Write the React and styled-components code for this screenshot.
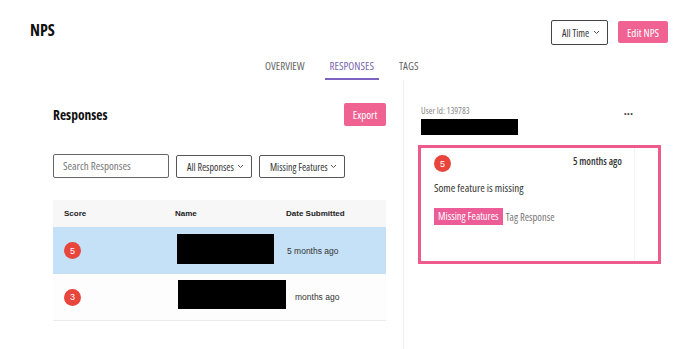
import React from "react";
import styled, { createGlobalStyle } from "styled-components";

const Global = createGlobalStyle`
  html, body { margin: 0; padding: 0; background: #ffffff; }
  body { font-family: "Open Sans", "Noto Sans", sans-serif; font-stretch: 75%; color: #222; }
  * { box-sizing: border-box; }
`;

const Page = styled.div`
  width: 700px;
  height: 349px;
  overflow: hidden;
  display: flex;
  flex-direction: column;
`;

const Header = styled.div`
  display: flex;
  justify-content: space-between;
  align-items: flex-start;
  padding: 20px 32px 0 30px;
  height: 45px;
`;

const Title = styled.h1`
  margin: 0;
  font-size: 16px;
  line-height: 20px;
  font-weight: 700;
  color: #111;
`;

const Actions = styled.div`
  display: flex;
  gap: 10px;
  align-items: flex-start;
`;

const Select = styled.div`
  display: flex;
  align-items: center;
  justify-content: space-between;
  white-space: nowrap;
  width: ${(p) => p.$w}px;
  height: ${(p) => p.$h || 24}px;
  margin-top: ${(p) => p.$mt || 0}px;
  padding: 0 7px 0 10px;
  border: 1px solid ${(p) => p.$border || "#555"};
  border-radius: 2px;
  font-size: ${(p) => p.$fs || 10}px;
  color: #333;
  background: #fff;
`;

const PinkButton = styled.button`
  width: ${(p) => p.$w}px;
  height: ${(p) => p.$h}px;
  margin-top: ${(p) => p.$mt || 0}px;
  border: none;
  border-radius: 2px;
  background: #f06292;
  color: #fff;
  font-family: inherit;
  font-stretch: inherit;
  font-size: 11px;
  padding: 0;
`;

const Tabs = styled.div`
  display: flex;
  gap: 15px;
  padding-left: 260px;
  height: 35px;
`;

const Tab = styled.div`
  padding: 14px 5px 3px;
  height: 35px;
  font-size: 11px;
  line-height: 14px;
  color: ${(p) => (p.$active ? "#7a68b0" : "#666")};
  border-bottom: 2px solid ${(p) => (p.$active ? "#7e62c0" : "transparent")};
`;

const Body = styled.div`
  flex: 1;
  display: grid;
  grid-template-columns: 403px 1fr;
`;

const Left = styled.div`
  padding: 23px 17px 0 53px;
`;

const TitleRow = styled.div`
  display: flex;
  justify-content: space-between;
  align-items: center;
  height: 23px;
`;

const SectionTitle = styled.h2`
  margin: 0;
  font-size: 13.5px;
  font-weight: 700;
  color: #111;
`;

const Filters = styled.div`
  display: flex;
  gap: 7px;
  margin-top: 28px;
  align-items: flex-start;
`;

const Search = styled.div`
  width: 116px;
  height: 24px;
  border: 1px solid #666;
  border-radius: 2px;
  padding: 0 9px;
  font-size: 11px;
  line-height: 22px;
  color: #777;
`;

const Table = styled.div`
  margin-top: 22px;
  display: flex;
  flex-direction: column;
  font-family: "Liberation Sans", Arial, sans-serif;
  font-stretch: normal;
`;

const Row = styled.div`
  display: grid;
  grid-template-columns: 111px 111px 1fr;
  align-items: center;
  padding-left: 11px;
  height: ${(p) => p.$h}px;
  background: ${(p) => p.$bg || "#fff"};
  border-bottom: ${(p) => (p.$line ? "1px solid #ececec" : "none")};
  font-size: 8.5px;
  color: #333;
`;

const HeadCell = styled.div`
  font-size: 8px;
  font-weight: 700;
  color: #222;
`;

const Cell = styled.div`
  display: flex;
  align-items: center;
  margin-left: ${(p) => p.$ml || 0}px;
`;

const Badge = styled.div`
  width: 17px;
  height: 17px;
  border-radius: 50%;
  background: #e8453c;
  color: #fff;
  font-family: "Liberation Sans", Arial, sans-serif;
  font-size: 9px;
  display: flex;
  align-items: center;
  justify-content: center;
`;

const Redact = styled.div`
  width: ${(p) => p.$w}px;
  height: ${(p) => p.$h}px;
  background: #000;
  margin-top: ${(p) => p.$mt || 0}px;
`;

const Right = styled.div`
  border-left: 1px solid #f1f1f4;
  padding: 26px 39px 0 14px;
`;

const UserRow = styled.div`
  display: flex;
  justify-content: space-between;
  align-items: flex-start;
  padding-left: 3px;
  padding-right: 28px;
`;

const UserId = styled.div`
  font-size: 9px;
  line-height: 10px;
  color: #888;
`;

const Dots = styled.div`
  margin-top: 3px;
  font-size: 12px;
  line-height: 10px;
  font-weight: 700;
  color: #444;
`;

const Highlight = styled.div`
  margin-top: 10px;
  height: 119px;
  border: 3px solid #ef5a8c;
  padding-right: 23px;
`;

const Card = styled.div`
  height: 100%;
  border-right: 1px solid #f3f3f6;
  padding: 7px 12px 0 13px;
`;

const CardTop = styled.div`
  display: flex;
  justify-content: space-between;
  align-items: center;
`;

const When = styled.div`
  font-size: 10px;
  font-weight: 600;
  color: #333;
  margin-top: -6px;
`;

const Comment = styled.div`
  margin-top: 9px;
  font-size: 11px;
  line-height: 14px;
  color: #333;
`;

const TagRow = styled.div`
  display: flex;
  align-items: center;
  gap: 3px;
  margin-top: 13px;
`;

const Tag = styled.span`
  background: #ec5c96;
  color: #fff;
  font-size: 10.5px;
  line-height: 17px;
  padding: 0 4px;
`;

const TagLink = styled.span`
  color: #777;
  font-size: 10.5px;
`;

const Chevron = () => (
  <svg width="7" height="5" viewBox="0 0 7 5" fill="none">
    <polyline points="1,1 3.5,3.5 6,1" stroke="#555" strokeWidth="1" />
  </svg>
);

export default function App() {
  return (
    <Page>
      <Global />
      <Header>
        <Title>NPS</Title>
        <Actions>
          <Select $w={57} $h={25} $border="#444">
            All Time <Chevron />
          </Select>
          <PinkButton $w={50} $h={22} $mt={1}>Edit NPS</PinkButton>
        </Actions>
      </Header>
      <Tabs>
        <Tab>OVERVIEW</Tab>
        <Tab $active>RESPONSES</Tab>
        <Tab>TAGS</Tab>
      </Tabs>
      <Body>
        <Left>
          <TitleRow>
            <SectionTitle>Responses</SectionTitle>
            <PinkButton $w={42} $h={23}>Export</PinkButton>
          </TitleRow>
          <Filters>
            <Search>Search Responses</Search>
            <Select $w={76} $h={23} $mt={1}>
              All Responses <Chevron />
            </Select>
            <Select $w={86} $h={23} $mt={1}>
              Missing Features <Chevron />
            </Select>
          </Filters>
          <Table>
            <Row $h={27} $bg="#f7f7f7">
              <HeadCell>Score</HeadCell>
              <HeadCell>Name</HeadCell>
              <HeadCell>Date Submitted</HeadCell>
            </Row>
            <Row $h={47} $bg="#c5e1f8">
              <Cell><Badge>5</Badge></Cell>
              <Cell $ml={2}><Redact $w={97} $h={30} $mt={-3} /></Cell>
              <Cell $ml={1}>5 months ago</Cell>
            </Row>
            <Row $h={47} $bg="#fdfdfd" $line>
              <Cell><Badge>3</Badge></Cell>
              <Cell $ml={3}><Redact $w={117} $h={29} $mt={-6} /></Cell>
              <Cell $ml={9}>months ago</Cell>
            </Row>
          </Table>
        </Left>
        <Right>
          <UserRow>
            <div>
              <UserId>User Id: 139783</UserId>
              <Redact $w={97} $h={16} $mt={3} />
            </div>
            <Dots>···</Dots>
          </UserRow>
          <Highlight>
            <Card>
              <CardTop>
                <Badge>5</Badge>
                <When>5 months ago</When>
              </CardTop>
              <Comment>Some feature is missing</Comment>
              <TagRow>
                <Tag>Missing Features</Tag>
                <TagLink>Tag Response</TagLink>
              </TagRow>
            </Card>
          </Highlight>
        </Right>
      </Body>
    </Page>
  );
}
